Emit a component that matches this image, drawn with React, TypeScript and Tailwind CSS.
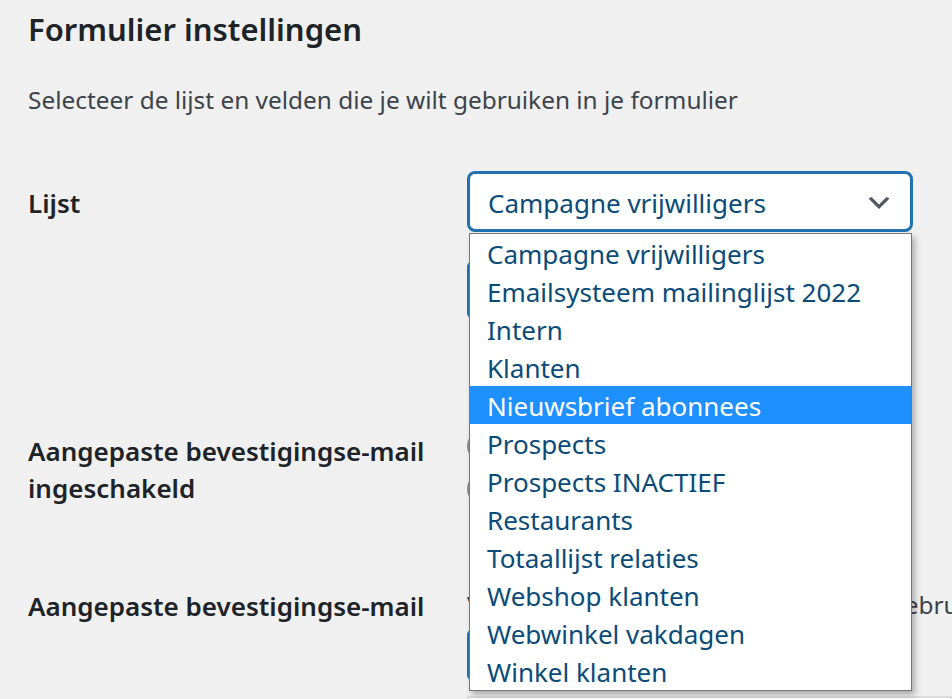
const lists = [
  "Campagne vrijwilligers",
  "Emailsysteem mailinglijst 2022",
  "Intern",
  "Klanten",
  "Nieuwsbrief abonnees",
  "Prospects",
  "Prospects INACTIEF",
  "Restaurants",
  "Totaallijst relaties",
  "Webshop klanten",
  "Webwinkel vakdagen",
  "Winkel klanten",
];

function Chevron() {
  return (
    <svg viewBox="0 0 20 20" className="h-[30px] w-[30px]" aria-hidden>
      <path d="M5 6l5 5 5-5 2 1-7 7-7-7 2-1z" fill="#50575e" />
    </svg>
  );
}

function ListSelect() {
  const active = 4;
  return (
    <div className="relative w-[446px]">
      <div className="flex h-[61px] items-center justify-between rounded-[8px] border-[3px] border-[#2271b1] bg-white pl-[18px] pr-[16px] pt-[3px] text-[26px] text-[#0a4b78]">
        <span>Campagne vrijwilligers</span>
        <Chevron />
      </div>
      {/* open native list */}
      <ul className="absolute left-[2px] right-[1px] top-[62px] z-10 border border-[#767676] bg-white shadow-[3px_4px_6px_rgba(0,0,0,0.28)]">
        {lists.map((name, i) => (
          <li
            key={name}
            className={
              i === active
                ? "flex h-[38px] items-center bg-[#1e90ff] pl-[17px] pt-[3px] text-[26px] text-white"
                : "flex h-[38px] items-center pl-[17px] pt-[3px] text-[26px] text-[#0a4b78]"
            }
          >
            {name}
          </li>
        ))}
      </ul>
    </div>
  );
}

function Radio({ label }: { label: string }) {
  return (
    <label className="flex h-[38px] items-center" aria-label={label}>
      <span className="h-[32px] w-[32px] rounded-full border-2 border-[#8c8f94] bg-white" />
    </label>
  );
}

export default function App() {
  return (
    <div className="h-[699px] overflow-hidden bg-[#f0f0f1] font-['Noto_Sans',sans-serif]">
      <div className="pl-[28px] pt-[9px]">
        <h2 className="text-[31px] font-semibold leading-[41px] text-[#1d2327]">Formulier instellingen</h2>
        <p className="mt-[30px] text-[24.4px] leading-[39px] text-[#3c434a]">
          Selecteer de lijst en velden die je wilt gebruiken in je formulier
        </p>

        <div className="mt-[52px] flex">
          <div className="w-[439px] shrink-0 pt-[14px] text-[26px] font-semibold leading-[37px] text-[#1d2327]">Lijst</div>
          <div className="flex flex-col">
            <ListSelect />
            <button
              aria-label="Velden ophalen"
              className="mt-[29px] h-[58px] w-[240px] rounded-[6px] border-2 border-[#2271b1] bg-[#f6f7f7]"
            />
          </div>
        </div>

        <div className="mt-[108px] flex">
          <div className="w-[439px] shrink-0 pt-[6px] text-[26px] font-semibold leading-[37px] text-[#1d2327]">
            Aangepaste bevestigingse-mail
            <br />
            ingeschakeld
          </div>
          <div className="flex flex-col gap-[5px]">
            <Radio label="Ja" />
            <Radio label="Nee" />
          </div>
        </div>

        <div className="mt-[77px] flex">
          <div className="w-[439px] shrink-0 pt-[3px] text-[26px] font-semibold leading-[37px] text-[#1d2327]">
            Aangepaste bevestigingse-mail
          </div>
          <div className="flex min-w-0 flex-1 flex-col">
            <p className="whitespace-nowrap text-[24.4px] leading-[39px] text-[#3c434a]">
              Vul de tekst in die je als mailtekst wil gebruiken
            </p>
            <button
              aria-label="Media toevoegen"
              className="mt-[5px] h-[52px] w-[240px] rounded-[6px] border-2 border-[#2271b1] bg-[#f6f7f7]"
            />
            <div className="mt-[15px] h-[80px] border-2 border-[#dcdcde] bg-white" />
          </div>
        </div>
      </div>
    </div>
  );
}
